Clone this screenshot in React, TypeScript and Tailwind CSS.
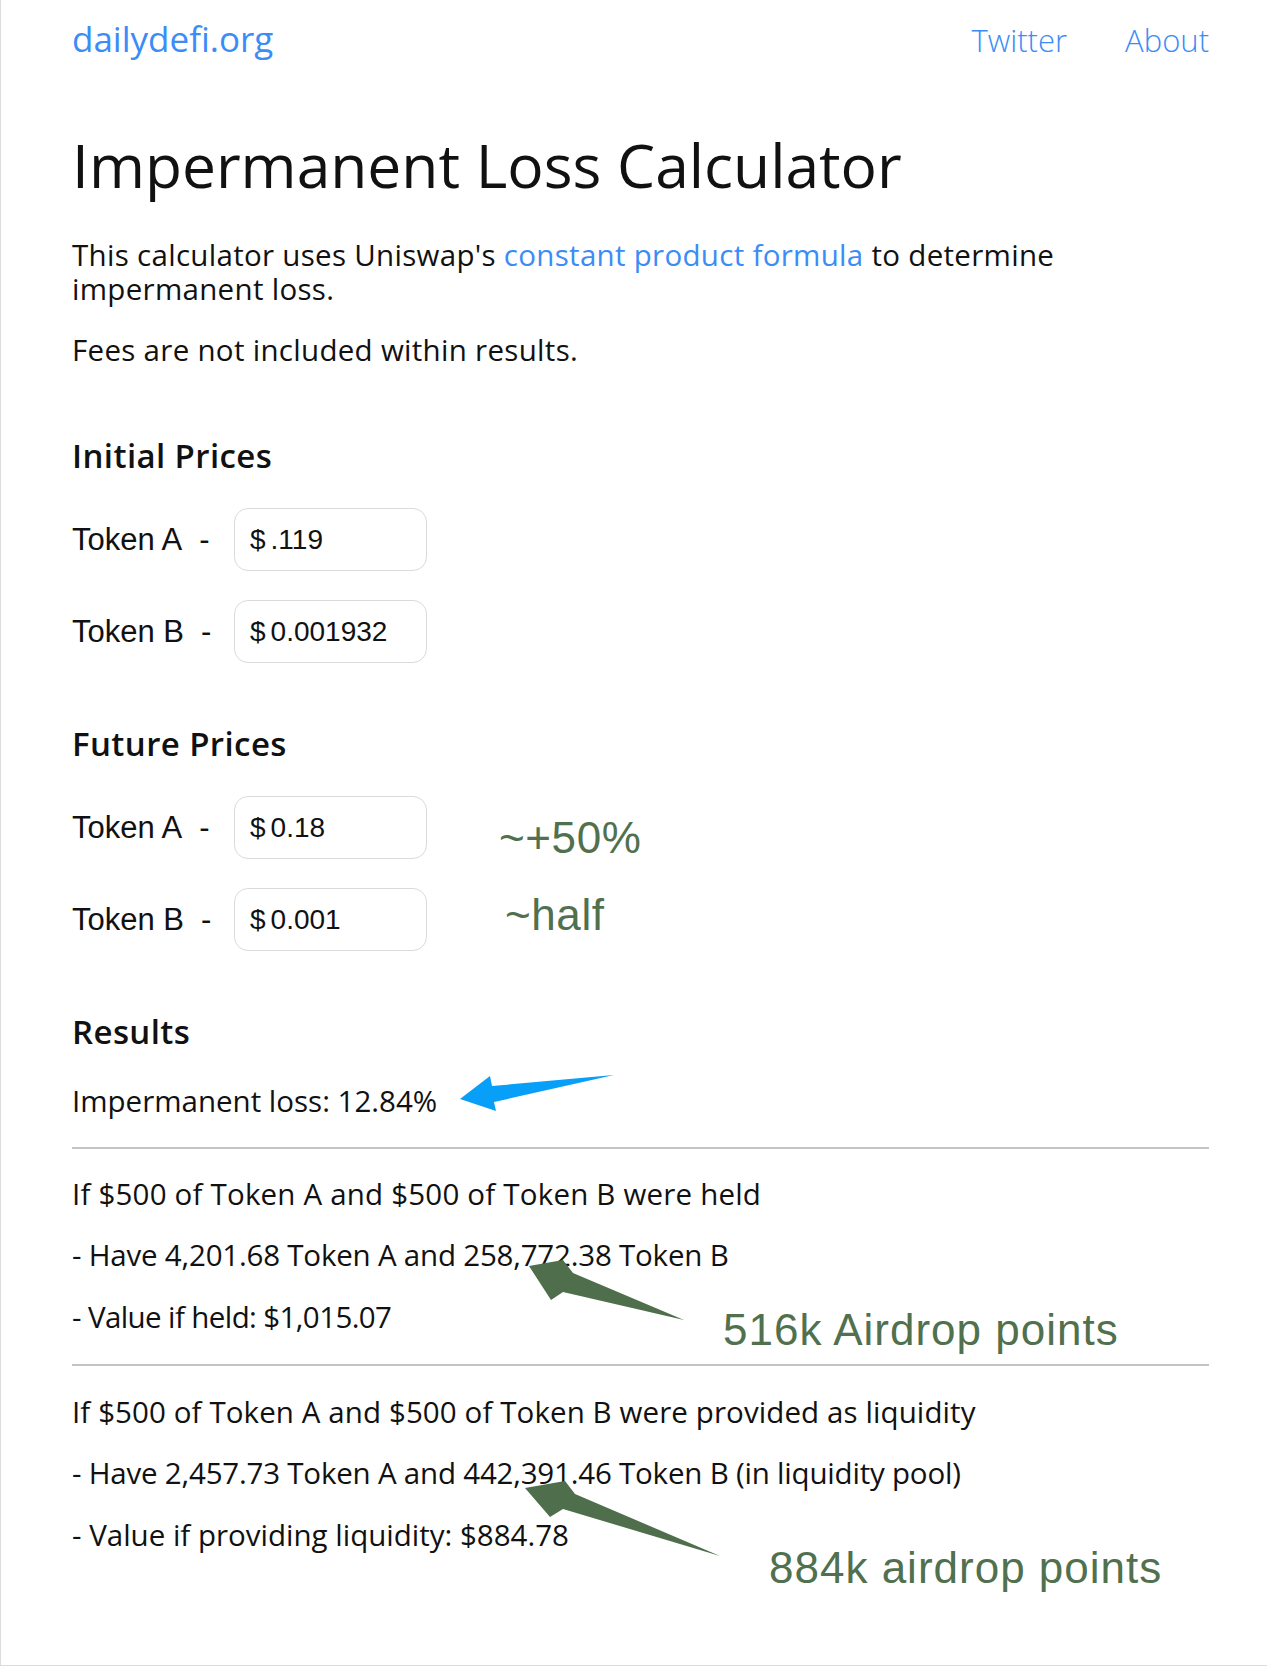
const sans = "font-['Open_Sans',sans-serif]";
const arial = "font-['Liberation_Sans',Arial,sans-serif]";

function PriceRow({ label, value, className = '' }: { label: string; value: string; className?: string }) {
	return (
		<div className={`flex items-center h-[63px] ${className}`}>
			<div className={`flex w-[162px] shrink-0 ${arial} text-[31px] leading-[34px] text-[#111]`}>
				<span>{label}</span>
				<span className="ml-[17px]">-</span>
			</div>
			<div
				className={`flex items-center w-[193px] h-[63px] rounded-[14px] border border-[#dadada] pl-[15px] ${arial} text-[28px] leading-[34px] text-[#111]`}
			>
				<span>$</span>
				<span className="ml-[5px]">{value}</span>
			</div>
		</div>
	);
}

function Heading({ children, className = '' }: { children: React.ReactNode; className?: string }) {
	return (
		<h2 className={`${sans} font-semibold text-[33px] tracking-[0.4px] leading-[40px] text-[#111] ${className}`}>
			{children}
		</h2>
	);
}

function Line({ children, className = 'tracking-[0.3px]' }: { children: React.ReactNode; className?: string }) {
	return <p className={`${sans} text-[29.5px] leading-[34px] text-[#111] ${className}`}>{children}</p>;
}

export default function App() {
	return (
		<div className="relative h-[1666px] w-full overflow-hidden bg-white border-l border-b border-[#dcdcdc]">
			<div className="pl-[71px] pr-[58px]">
				<header className="flex items-baseline justify-between pt-[16px]">
					<a className={`${sans} text-[35px] leading-[46px] text-[#3b8cf6]`}>dailydefi.org</a>
					<nav className="flex items-baseline gap-[58px]">
						<a className={`${sans} font-light text-[31px] leading-[46px] text-[#3b8cf6]`}>Twitter</a>
						<a className={`${sans} font-light text-[31px] leading-[46px] text-[#3b8cf6]`}>About</a>
					</nav>
				</header>

				<h1 className={`${sans} mt-[66px] text-[60.5px] leading-[72px] text-[#111]`}>Impermanent Loss Calculator</h1>

				<Line className="mt-[37px] tracking-[0.3px]">
					This calculator uses Uniswap's <a className="text-[#3b8cf6]">constant product formula</a> to determine
					<br />
					impermanent loss.
				</Line>
				<Line className="mt-[27px] tracking-[0.3px]">Fees are not included within results.</Line>

				<Heading className="mt-[69px]">Initial Prices</Heading>
				<PriceRow className="mt-[32px]" label="Token A" value=".119" />
				<PriceRow className="mt-[29px]" label="Token B" value="0.001932" />

				<Heading className="mt-[61px]">Future Prices</Heading>
				<PriceRow className="mt-[32px]" label="Token A" value="0.18" />
				<PriceRow className="mt-[29px]" label="Token B" value="0.001" />

				<Heading className="mt-[61px]">Results</Heading>
				<Line className="mt-[32px] tracking-[0px]">Impermanent loss: 12.84%</Line>

				<hr className="mt-[29px] border-0 border-t-2 border-[#c4c4c4]" />
				<Line className="mt-[28px] tracking-[0.2px]">If $500 of Token A and $500 of Token B were held</Line>
				<Line className="mt-[27px] tracking-[-0.2px]">- Have 4,201.68 Token A and 258,772.38 Token B</Line>
				<Line className="mt-[28px] tracking-[-0.6px]">- Value if held: $1,015.07</Line>

				<hr className="mt-[30px] border-0 border-t-2 border-[#c4c4c4]" />
				<Line className="mt-[29px] tracking-[0.1px]">If $500 of Token A and $500 of Token B were provided as liquidity</Line>
				<Line className="mt-[27px] tracking-[-0.2px]">- Have 2,457.73 Token A and 442,391.46 Token B (in liquidity pool)</Line>
				<Line className="mt-[28px] tracking-[0px]">- Value if providing liquidity: $884.78</Line>
			</div>

			{/* hand-drawn annotations on top of the page */}
			<div className={`absolute left-[498px] top-[816px] ${arial} text-[44px] tracking-[0.6px] leading-[44px] text-[#50704e]`}>
				~+50%
			</div>
			<div className={`absolute left-[504px] top-[893px] ${arial} text-[44px] tracking-[0.6px] leading-[44px] text-[#50704e]`}>
				~half
			</div>
			<div
				className={`absolute left-[722px] top-[1308px] ${arial} text-[44px] tracking-[1px] leading-[44px] text-[#50704e] whitespace-nowrap`}
			>
				516k Airdrop points
			</div>
			<div
				className={`absolute left-[768px] top-[1546px] ${arial} text-[44px] tracking-[1px] leading-[44px] text-[#50704e] whitespace-nowrap`}
			>
				884k airdrop points
			</div>

			<svg className="absolute left-0 top-0 pointer-events-none" width="1267" height="1666" viewBox="0 0 1267 1666">
				<polygon points="459,1099 489,1076 491,1086 613,1075 493,1102 495,1111" fill="#079ff7" />
				<polygon points="528,1266 562,1260 572,1273 683,1320 562,1292 550,1300" fill="#4f6e4c" />
				<polygon points="524,1488 564,1481 574,1494 719,1556 562,1509 549,1517" fill="#4f6e4c" />
			</svg>
		</div>
	);
}
